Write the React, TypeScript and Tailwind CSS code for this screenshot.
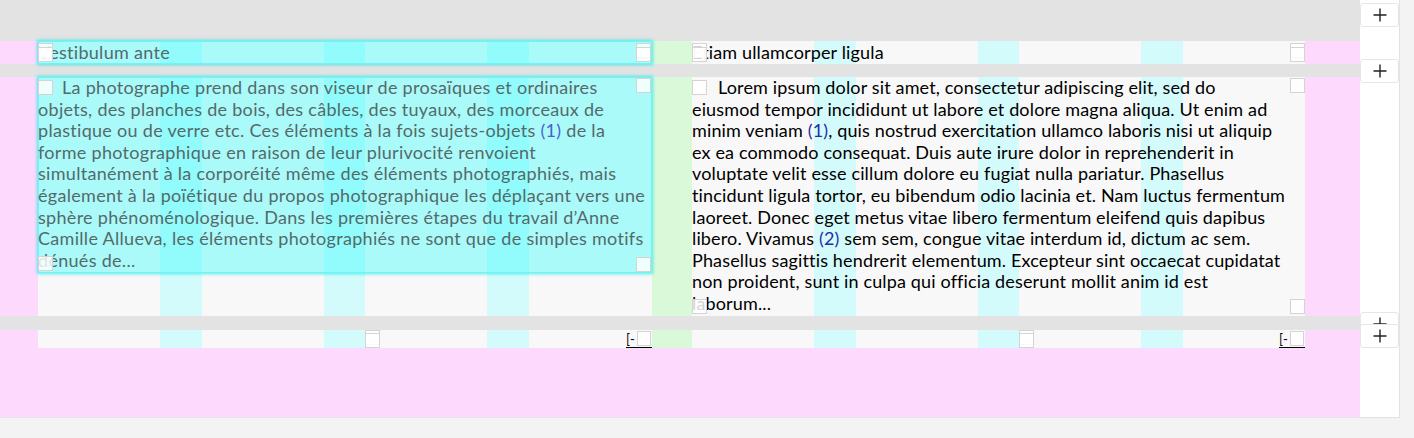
import React from "react";

function Box({ className }: { className: string }) {
  return (
    <span
      className={
        "absolute w-[15px] h-[15px] border border-[#d4d4d4] bg-[rgba(255,255,255,0.82)] " +
        className
      }
    />
  );
}

function Plus() {
  return (
    <svg width="14" height="14" viewBox="0 0 14 14">
      <path d="M7 0.5V13.5M0.5 7H13.5" stroke="#222" strokeWidth="1.4" />
    </svg>
  );
}

const STRIPES =
  "bg-[linear-gradient(to_right,#f8f8f8_0,#f8f8f8_122px,#d4fbfb_122px,#d4fbfb_164px,#f8f8f8_164px,#f8f8f8_286px,#d4fbfb_286px,#d4fbfb_327px,#f8f8f8_327px,#f8f8f8_449px,#d4fbfb_449px,#d4fbfb_491px,#f8f8f8_491px)]";

const leftLines: React.ReactNode[] = [
  "objets, des planches de bois, des câbles, des tuyaux, des morceaux de",
  <>
    plastique ou de verre etc. Ces éléments à la fois sujets-objets{" "}
    <span className="text-[#4a63c8]">(1)</span> de la
  </>,
  "forme photographique en raison de leur plurivocité renvoient",
  "simultanément à la corporéité même des éléments photographiés, mais",
  "également à la poïétique du propos photographique les déplaçant vers une",
  "sphère phénoménologique. Dans les premières étapes du travail d’Anne",
  "Camille Allueva, les éléments photographiés ne sont que de simples motifs",
  "dénués de...",
];

const rightLines: React.ReactNode[] = [
  "eiusmod tempor incididunt ut labore et dolore magna aliqua. Ut enim ad",
  <>
    minim veniam <span className="text-[#1f2fa8]">(1)</span>, quis nostrud exercitation ullamco laboris nisi ut aliquip
  </>,
  "ex ea commodo consequat. Duis aute irure dolor in reprehenderit in",
  "voluptate velit esse cillum dolore eu fugiat nulla pariatur. Phasellus",
  "tincidunt ligula tortor, eu bibendum odio lacinia et. Nam luctus fermentum",
  "laoreet. Donec eget metus vitae libero fermentum eleifend quis dapibus",
  <>
    libero. Vivamus <span className="text-[#1f2fa8]">(2)</span> sem sem, congue vitae interdum id, dictum ac sem.
  </>,
  "Phasellus sagittis hendrerit elementum. Excepteur sint occaecat cupidatat",
  "non proident, sunt in culpa qui officia deserunt mollit anim id est",
  "laborum...",
];

function Collapse() {
  return (
    <div className="absolute right-0 bottom-0 w-[26px] h-[18px] border-b border-black flex items-end">
      <span className="text-[13px] leading-[16px] text-black">[-</span>
      <span className="absolute right-[1px] top-[1px] w-[14px] h-[15px] border border-[#d4d4d4] bg-[rgba(255,255,255,0.85)]" />
    </div>
  );
}

export default function App() {
  return (
    <div className="w-[1414px] h-[438px] bg-[#f3f3f3] flex overflow-hidden font-['Lato',_'Liberation_Sans',_sans-serif] text-[18px] leading-[21.6px]">
      <div className="w-[1360px] h-[418px] bg-[#e3e3e3] flex flex-col pt-[41px] border-b border-[#e4e4e4]">
        {/* Row 1 */}
        <div className="flex h-[23px] bg-[#fed9fe] pl-[38px] pr-[55px]">
          <div className={"relative w-[614px] " + STRIPES}>
            <div className="absolute inset-0 bg-[rgba(0,255,255,0.31)] border border-[#6ff5f5] shadow-[0_0_3px_1px_rgba(40,235,235,0.8)]" />
            <div className="relative text-[#536a6a] whitespace-nowrap pt-[1px] tracking-[0.3px]">Vestibulum ante</div>
            <Box className="left-0 top-[2px]" />
            <Box className="left-0 top-[6px]" />
            <Box className="right-[1px] top-[2px]" />
            <Box className="right-[1px] top-[6px]" />
          </div>
          <div className="w-[40px] bg-[#d9f9d9]" />
          <div className={"relative w-[613px] " + STRIPES}>
            <div className="relative text-black whitespace-nowrap pt-[1px] tracking-[0.15px]">Etiam ullamcorper ligula</div>
            <Box className="left-0 top-[2px]" />
            <Box className="left-0 top-[6px]" />
            <Box className="right-0 top-[2px]" />
            <Box className="right-0 top-[6px]" />
          </div>
        </div>

        <div className="h-[13px]" />

        {/* Row 2 */}
        <div className="flex h-[239px] bg-[#fed9fe] pl-[38px] pr-[55px]">
          <div className={"relative w-[614px] " + STRIPES}>
            <div className="absolute left-0 right-0 top-0 h-[196px] bg-[rgba(0,255,255,0.31)] border border-[#6ff5f5] shadow-[0_0_3px_1px_rgba(40,235,235,0.8)]" />
            <div className="relative text-[#536a6a] whitespace-nowrap tracking-[0.3px]">
              <div className="flex items-center">
                <span className="w-[15px] h-[15px] border border-[#d4d4d4] bg-[rgba(255,255,255,0.82)] mr-[9px]" />
                <span>La photographe prend dans son viseur de prosaïques et ordinaires</span>
              </div>
              {leftLines.map((l, i) => (
                <div key={i}>{l}</div>
              ))}
            </div>
            <Box className="right-[1px] top-[1px]" />
            <Box className="left-0 top-[179px]" />
            <Box className="right-[1px] top-[180px]" />
          </div>
          <div className="w-[40px] bg-[#d9f9d9]" />
          <div className={"relative w-[613px] " + STRIPES}>
            <div className="relative text-black whitespace-nowrap tracking-[0.15px]">
              <div className="flex items-center">
                <span className="w-[15px] h-[15px] border border-[#d4d4d4] bg-[rgba(255,255,255,0.82)] mr-[11px]" />
                <span>Lorem ipsum dolor sit amet, consectetur adipiscing elit, sed do</span>
              </div>
              {rightLines.map((l, i) => (
                <div key={i}>{l}</div>
              ))}
            </div>
            <Box className="right-0 top-[1px]" />
            <Box className="left-0 top-[222px]" />
            <Box className="right-0 top-[222px]" />
          </div>
        </div>

        <div className="h-[14px]" />

        {/* Row 3 */}
        <div className="flex-1 bg-[#fed9fe] pl-[38px] pr-[55px]">
          <div className="flex h-[18px]">
            <div className={"relative w-[614px] " + STRIPES}>
              <Box className="left-[327px] top-0" />
              <Box className="left-[327px] top-[3px]" />
              <Collapse />
            </div>
            <div className="w-[40px] bg-[#d9f9d9]" />
            <div className={"relative w-[613px] " + STRIPES}>
              <Box className="left-[327px] top-0" />
              <Box className="left-[327px] top-[3px]" />
              <Collapse />
            </div>
          </div>
        </div>
      </div>

      {/* Right tool column */}
      <div className="w-[40px] h-[418px] bg-white border-r border-b border-[#e2e2e2] flex flex-col">
        <button className="mt-[3px] h-[24px] w-[39px] rounded-[3px] border border-[#e6e6e6] bg-white flex items-center justify-center">
          <Plus />
        </button>
        <button className="mt-[32px] h-[24px] w-[39px] rounded-[3px] border border-[#e6e6e6] bg-white flex items-center justify-center">
          <Plus />
        </button>
        <button className="mt-[229px] h-[24px] w-[39px] rounded-[3px] border border-[#e6e6e6] bg-white flex items-center justify-center">
          <Plus />
        </button>
        <button className="relative -mt-[12px] h-[24px] w-[39px] rounded-[3px] border border-[#e6e6e6] bg-white flex items-center justify-center">
          <Plus />
        </button>
      </div>
    </div>
  );
}
